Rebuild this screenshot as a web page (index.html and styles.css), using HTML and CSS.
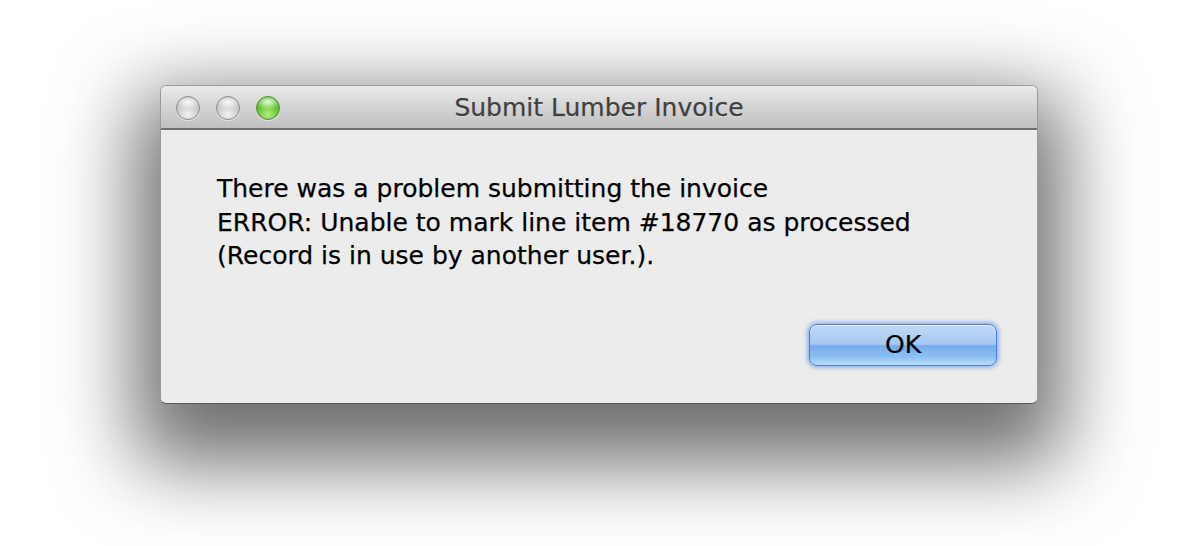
FILE: index.html
```html
<!DOCTYPE html>
<html>
<head>
<meta charset="utf-8">
<title>Submit Lumber Invoice</title>
<link rel="stylesheet" href="styles.css">
</head>
<body>
<div class="stage">
  <div class="window">
    <div class="titlebar">
      <div class="lights">
        <span class="light gray"></span>
        <span class="light gray"></span>
        <span class="light green"></span>
      </div>
      <div class="title">Submit Lumber Invoice</div>
    </div>
    <div class="content">
      <p class="message">There was a problem submitting the invoice<br>ERROR: Unable to mark line item #18770 as processed<br>(Record is in use by another user.).</p>
      <div class="actions">
        <button class="btn-ok">OK</button>
      </div>
    </div>
  </div>
</div>
</body>
</html>
```

FILE: styles.css
```css
html, body {
  margin: 0;
  padding: 0;
  background: #ffffff;
  width: 1200px;
  height: 546px;
  overflow: hidden;
}

.stage {
  padding: 85px 0 0 160px;
  display: flex;
}

.window {
  width: 878px;
  height: 319px;
  box-sizing: border-box;
  display: flex;
  flex-direction: column;
  background: #ececec;
  border: 1px solid #9a9a9a;
  border-bottom-color: #5c5c5c;
  border-radius: 6px;
  box-shadow: 0 35px 80px 25px rgba(0, 0, 0, 0.57);
  font-family: "DejaVu Sans", "Liberation Sans", sans-serif;
}

.titlebar {
  height: 42px;
  flex: none;
  position: relative;
  display: flex;
  align-items: center;
  justify-content: center;
  background: linear-gradient(#ebebeb, #d6d6d6 45%, #c0c0c0);
  border-bottom: 2px solid #6f6f6f;
  border-radius: 5px 5px 0 0;
}

.lights {
  position: absolute;
  left: 15px;
  top: 10px;
  display: flex;
  gap: 16px;
}

.light {
  width: 24px;
  height: 24px;
  box-sizing: border-box;
  border-radius: 50%;
}

.light.gray {
  border: 1px solid #8c8c8c;
  background:
    radial-gradient(ellipse 60% 35% at 50% 22%, rgba(255,255,255,0.95), rgba(255,255,255,0) 100%),
    radial-gradient(circle at 50% 80%, #f2f2f2 0%, #cfcfcf 45%, #a9a9a9 100%);
  box-shadow: 0 1px 1px rgba(255,255,255,0.6);
}

.light.green {
  border: 1px solid #4f8f2e;
  background:
    radial-gradient(ellipse 60% 35% at 50% 22%, rgba(240,255,230,0.95), rgba(255,255,255,0) 100%),
    radial-gradient(circle at 50% 80%, #b6f07a 0%, #6cc63f 45%, #3f9b22 100%);
  box-shadow: 0 1px 1px rgba(255,255,255,0.6);
}

.title {
  font-size: 25px;
  color: #404040;
  -webkit-text-stroke: 0.25px #404040;
  text-shadow: 0 1px 0 rgba(255,255,255,0.5);
  margin-top: 1px;
}

.content {
  flex: 1;
  display: flex;
  flex-direction: column;
  padding: 42px 40px 0 56px;
}

.message {
  margin: 0;
  font-size: 25px;
  line-height: 33.5px;
  color: #000;
  -webkit-text-stroke: 0.25px #000;
}

.actions {
  display: flex;
  justify-content: flex-end;
  margin-top: 51px;
}

.btn-ok {
  width: 188px;
  height: 42px;
  border-radius: 8px;
  border: 1px solid #4a7fd0;
  background:
    linear-gradient(#c3d9f6 0%, #a7c7f2 48%, #76acee 52%, #8cc0f4 80%, #b8dcfc 100%);
  box-shadow: 0 0 4px 2px rgba(70, 135, 225, 0.55), inset 0 1px 0 rgba(255,255,255,0.6);
  font-family: "DejaVu Sans", "Liberation Sans", sans-serif;
  font-size: 25px;
  color: #000;
  -webkit-text-stroke: 0.2px #000;
  padding: 0;
}
```
